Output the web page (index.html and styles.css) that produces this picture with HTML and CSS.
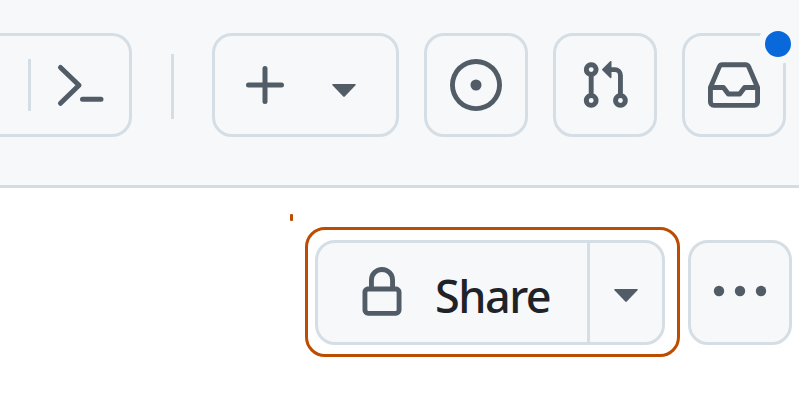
FILE: index.html
```html
<!DOCTYPE html>
<html lang="en">
<head>
<meta charset="utf-8">
<title>Share</title>
<link rel="stylesheet" href="styles.css">
</head>
<body>
<header class="header">
  <div class="search">
    <span class="search-divider"></span>
    <svg class="prompt" width="48" height="48" viewBox="0 0 48 48"><path d="M4.5 6.5 23 24.3 4.5 42.3M26.5 38.2H45"/></svg>
  </div>
  <span class="divider"></span>
  <button class="button create" aria-label="Create">
    <svg class="plus" width="40" height="40" viewBox="0 0 40 40"><path d="M20 3.5v33M3.5 20h33"/></svg>
    <svg class="caret" width="24" height="13" viewBox="0 0 24 13"><path d="M1 0h22q1.5 0 .5 1.2L13 12.2q-1 1-2 0L.5 1.2Q-.5 0 1 0Z"/></svg>
  </button>
  <button class="button" aria-label="Issues">
    <svg width="52" height="52" viewBox="0 0 16 16"><path d="M8 9.7a1.7 1.7 0 1 0 0-3.4 1.7 1.7 0 0 0 0 3.4Z"/><path d="M8 0a8 8 0 1 1 0 16A8 8 0 0 1 8 0ZM1.5 8a6.5 6.5 0 1 0 13 0 6.5 6.5 0 0 0-13 0Z"/></svg>
  </button>
  <button class="button" aria-label="Pull requests">
    <svg width="52" height="52" viewBox="0 0 16 16"><path d="M1.5 3.25a2.25 2.25 0 1 1 3 2.122v5.256a2.251 2.251 0 1 1-1.5 0V5.372A2.25 2.25 0 0 1 1.5 3.25Zm5.677-.177L9.573.677A.25.25 0 0 1 10 .854V2.5h1A2.5 2.5 0 0 1 13.5 5v5.628a2.251 2.251 0 1 1-1.5 0V5a1 1 0 0 0-1-1h-1v1.646a.25.25 0 0 1-.427.177L7.177 3.427a.25.25 0 0 1 0-.354ZM3.75 2.5a.75.75 0 1 0 0 1.5.75.75 0 0 0 0-1.5Zm0 9.5a.75.75 0 1 0 0 1.5.75.75 0 0 0 0-1.5Zm8.25.75a.75.75 0 1 0 1.5 0 .75.75 0 0 0-1.5 0Z"/></svg>
  </button>
  <button class="button" aria-label="Inbox">
    <svg width="52" height="52" viewBox="0 0 16 16"><path d="M2.8 2.06A1.75 1.75 0 0 1 4.41 1h7.18c.7 0 1.333.417 1.61 1.06l2.74 6.395c.04.093.06.194.06.295v4.5A1.75 1.75 0 0 1 14.25 15H1.75A1.75 1.75 0 0 1 0 13.25v-4.5c0-.101.02-.202.06-.295Zm1.61.44a.25.25 0 0 0-.23.152L1.887 8H4.75a.75.75 0 0 1 .6.3L6.625 10h2.75l1.275-1.7a.75.75 0 0 1 .6-.3h2.863L11.82 2.652a.25.25 0 0 0-.23-.152Zm10.09 7h-2.875l-1.275 1.7a.75.75 0 0 1-.6.3h-3.5a.75.75 0 0 1-.6-.3L4.375 9.5H1.5v3.75c0 .138.112.25.25.25h12.5a.25.25 0 0 0 .25-.25Z"/></svg>
    <span class="badge"></span>
  </button>
</header>
<main class="actions">
  <span class="tick"></span>
  <div class="highlight">
    <div class="share-group">
      <button class="share">
        <svg width="52" height="52" viewBox="0 0 16 16"><path d="M4 4a4 4 0 0 1 8 0v2h.25c.966 0 1.75.784 1.75 1.75v5.5A1.75 1.75 0 0 1 12.25 15h-8.5A1.75 1.75 0 0 1 2 13.25v-5.5C2 6.784 2.784 6 3.75 6H4Zm8.25 3.5h-8.5a.25.25 0 0 0-.25.25v5.5c0 .138.112.25.25.25h8.5a.25.25 0 0 0 .25-.25v-5.5a.25.25 0 0 0-.25-.25ZM10.5 6V4a2.5 2.5 0 1 0-5 0v2Z"/></svg>
        <span class="label">Share</span>
      </button>
      <button class="share-menu" aria-label="Share options">
        <svg class="caret" width="24" height="13" viewBox="0 0 24 13"><path d="M1 0h22q1.5 0 .5 1.2L13 12.2q-1 1-2 0L.5 1.2Q-.5 0 1 0Z"/></svg>
      </button>
    </div>
  </div>
  <button class="button more" aria-label="More">
    <svg width="54" height="12" viewBox="0 0 54 12"><circle cx="6" cy="6" r="5.2"/><circle cx="27" cy="6" r="5.2"/><circle cx="48" cy="6" r="5.2"/></svg>
  </button>
</main>
</body>
</html>
```
FILE: styles.css
```css
* { box-sizing: border-box; }

body {
  margin: 0;
  width: 799px;
  height: 419px;
  overflow: hidden;
  background: #fff;
  font-family: "Noto Sans", "Open Sans", sans-serif;
}

button {
  margin: 0;
  padding: 0;
  border: 0;
  background: none;
  font: inherit;
}

svg { display: block; flex: none; fill: #515c67; }

.header {
  display: flex;
  align-items: flex-start;
  height: 188px;
  padding-top: 33px;
  background: #f6f8fa;
  border-bottom: 3px solid #d4dce3;
}

.search {
  display: flex;
  align-items: center;
  flex: none;
  width: 132px;
  height: 104px;
  padding-left: 28px;
  border: 3px solid #d6dee5;
  border-left: 0;
  border-radius: 0 20px 20px 0;
}

.search-divider { width: 3px; height: 52px; background: #d6dee5; }

.prompt { margin-left: 25px; }

.prompt path, .plus path {
  fill: none;
  stroke: #515c67;
  stroke-width: 5;
  stroke-linecap: round;
  stroke-linejoin: round;
}

.divider {
  flex: none;
  width: 3px;
  height: 65px;
  margin: 21px 38px 0 39px;
  background: #d6dee5;
}

.button {
  position: relative;
  display: flex;
  align-items: center;
  justify-content: center;
  flex: none;
  width: 104px;
  height: 104px;
  border: 3px solid #d6dee5;
  border-radius: 20px;
  background: #f6f8fa;
}

.header .button + .button { margin-left: 25.2px; }

.header .create {
  justify-content: flex-start;
  width: 186.5px;
  padding-left: 30px;
}

.create .caret { margin: 11px 0 0 46.5px; }

.badge {
  position: absolute;
  top: -12px;
  right: -15px;
  width: 40px;
  height: 40px;
  border: 7px solid #f6f8fa;
  border-radius: 50%;
  background: #0969da;
}

.actions {
  display: flex;
  align-items: flex-start;
  padding: 26px 0 0 290px;
}

.tick { width: 3px; height: 7px; background: #bc4c00; border-radius: 1px; }

.highlight {
  width: 375px;
  height: 130px;
  margin: 13px 0 0 12px;
  padding: 10px 7px;
  border: 3px solid #bc4c00;
  border-radius: 20px;
}

.share-group {
  display: flex;
  width: 350px;
  height: 105px;
  border: 3px solid #d6dee5;
  border-radius: 20px;
  background: #f6f8fa;
}

.share {
  display: flex;
  align-items: center;
  width: 272px;
  padding-left: 38px;
  border-right: 3px solid #d6dee5;
}

.label {
  margin: 7px 0 0 27px;
  color: #1f2328;
  font-size: 45px;
  font-weight: 500;
  line-height: 60px;
  letter-spacing: -1.5px;
}

.share-menu {
  display: flex;
  align-items: center;
  justify-content: center;
  flex: 1;
  padding-top: 6px;
}

.more {
  width: 103.5px;
  height: 105px;
  margin: 26px 0 0 8px;
  padding-bottom: 3px;
}
```
